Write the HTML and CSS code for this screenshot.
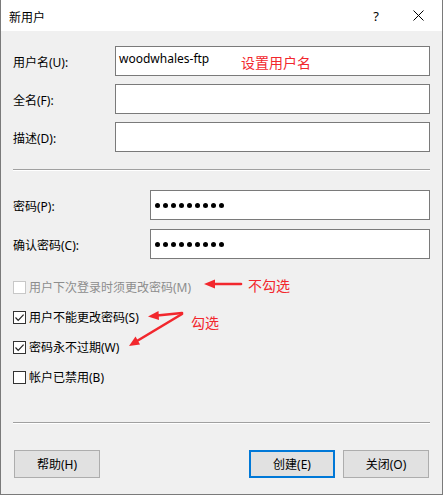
FILE: index.html
```html
<!DOCTYPE html>
<html lang="zh-CN">
<head>
  <meta charset="UTF-8" />
  <title>新用户</title>
  <link rel="stylesheet" href="styles.css">
</head>
<body>
  <div class="window">
    <div class="titlebar">
      <span class="title">新用户</span>
      <span class="help">?</span>
      <span class="close">
        <svg width="11" height="11" viewBox="0 0 11 11"><path d="M0.5 0.5 L10.5 10.5 M10.5 0.5 L0.5 10.5" stroke="#000" stroke-width="1"/></svg>
      </span>
    </div>

    <div class="body">
      <div class="fields">
        <div class="field">
          <label>用户名(U):</label>
          <div class="input">woodwhales-ftp</div>
        </div>
        <div class="field">
          <label>全名(F):</label>
          <div class="input"></div>
        </div>
        <div class="field">
          <label>描述(D):</label>
          <div class="input"></div>
        </div>
      </div>

      <div class="sep"></div>

      <div class="fields pw">
        <div class="field">
          <label>密码(P):</label>
          <div class="input dots">
            <span></span><span></span><span></span><span></span><span></span><span></span><span></span><span></span><span></span>
          </div>
        </div>
        <div class="field">
          <label>确认密码(C):</label>
          <div class="input dots">
            <span></span><span></span><span></span><span></span><span></span><span></span><span></span><span></span><span></span>
          </div>
        </div>
      </div>

      <div class="checks">
        <div class="check disabled"><span class="box"></span>用户下次登录时须更改密码(M)</div>
        <div class="check"><span class="box"><svg width="11" height="11" viewBox="0 0 11 11"><path d="M1.5 5.5 L4.2 8.3 L9.6 2.6" fill="none" stroke="#222" stroke-width="1.2"/></svg></span>用户不能更改密码(S)</div>
        <div class="check"><span class="box"><svg width="11" height="11" viewBox="0 0 11 11"><path d="M1.5 5.5 L4.2 8.3 L9.6 2.6" fill="none" stroke="#222" stroke-width="1.2"/></svg></span>密码永不过期(W)</div>
        <div class="check"><span class="box"></span>帐户已禁用(B)</div>
      </div>

      <div class="sep bottom"></div>

      <div class="buttons">
        <button class="btn">帮助(H)</button>
        <span class="spacer"></span>
        <button class="btn default">创建(E)</button>
        <button class="btn">关闭(O)</button>
      </div>
    </div>

    <!-- annotations -->
    <span class="note note-name">设置用户名</span>
    <span class="note note-off">不勾选</span>
    <span class="note note-on">勾选</span>
    <svg class="arrows" width="443" height="495" viewBox="0 0 443 495">
      <g stroke="#f2272d" stroke-width="2.6" fill="#f2272d" stroke-linecap="round">
        <line x1="240" y1="284" x2="212" y2="284"/>
        <polygon points="203,284 214,279.5 214,288.5" stroke="none"/>
        <line x1="181" y1="313" x2="156" y2="315.5"/>
        <polygon points="147,316.5 157.5,311 158,320" stroke="none"/>
        <line x1="181" y1="314" x2="136" y2="341"/>
        <polygon points="128,346 134.5,336.5 139,344.5" stroke="none"/>
      </g>
    </svg>
  </div>
</body>
</html>
```

FILE: styles.css
```css
body {
  margin: 0;
  font-family: "Noto Sans", "Noto Sans CJK SC", sans-serif;
  font-size: 12px;
  color: #000;
  background-color: #f0f0f0;
}

.window {
  position: relative;
  width: 443px;
  height: 495px;
  box-sizing: border-box;
  border: 1px solid #7a7a7a;
  border-top: none;
  background-color: #f0f0f0;
  overflow: hidden;
}

.titlebar {
  display: flex;
  align-items: center;
  height: 31px;
  background-color: #fff;
  padding-left: 8px;
}

.title {
  flex: 1;
  font-size: 12px;
  font-family: "Noto Sans CJK SC", sans-serif;
  padding-top: 1px;
}

.help {
  width: 20px;
  margin-right: 27px;
  text-align: center;
  font-size: 13px;
}

.close {
  display: flex;
  margin-right: 18px;
}

.body {
  padding: 15px 12px 0 12px;
}

.fields {
  display: flex;
  flex-direction: column;
  gap: 8px;
}

.fields.pw {
  gap: 9px;
  margin-top: 19px;
}

.field {
  display: grid;
  grid-template-columns: 102px 1fr;
  align-items: center;
}

.pw .field {
  grid-template-columns: 137px 1fr;
}

.field label {
  padding-top: 1px;
}

.input {
  height: 30px;
  box-sizing: border-box;
  border: 1px solid #7a7a7a;
  background-color: #fff;
  padding: 3px 0 0 3px;
  font-size: 12px;
}

.dots {
  display: flex;
  align-items: center;
  gap: 3px;
  padding: 0 0 0 4px;
}

.dots span {
  width: 5px;
  height: 5px;
  border-radius: 50%;
  background-color: #000;
}

.sep {
  margin-top: 17px;
  height: 0;
  border-top: 1px solid #a0a0a0;
  border-bottom: 1px solid #fff;
}

.sep.bottom {
  margin-top: 30px;
}

.checks {
  margin-top: 13px;
}

.check {
  display: flex;
  align-items: center;
  height: 30px;
  gap: 3px;
}

.check.disabled {
  color: #8d8d8d;
}

.box {
  display: flex;
  align-items: center;
  justify-content: center;
  width: 13px;
  height: 13px;
  box-sizing: border-box;
  border: 1px solid #333;
  background-color: #fff;
}

.disabled .box {
  border-color: #c8c8c8;
}

.buttons {
  display: flex;
  gap: 8px;
  margin-top: 26px;
  padding: 0 1px;
}

.spacer {
  flex: 1;
}

.btn {
  width: 86px;
  height: 28px;
  box-sizing: border-box;
  border: 1px solid #adadad;
  background-color: #e1e1e1;
  font-family: "Noto Sans", "Noto Sans CJK SC", sans-serif;
  font-size: 12px;
  color: #000;
  padding: 0;
}

.btn.default {
  border: 2px solid #0078d7;
}

.note {
  position: absolute;
  color: #f2272d;
  font-family: "Noto Sans CJK SC", sans-serif;
  font-size: 14px;
  line-height: 16px;
}

.note-name {
  left: 240px;
  top: 54px;
}

.note-off {
  left: 247px;
  top: 277px;
}

.note-on {
  left: 190px;
  top: 314px;
}

.arrows {
  position: absolute;
  left: 0;
  top: 0;
  pointer-events: none;
}
```
